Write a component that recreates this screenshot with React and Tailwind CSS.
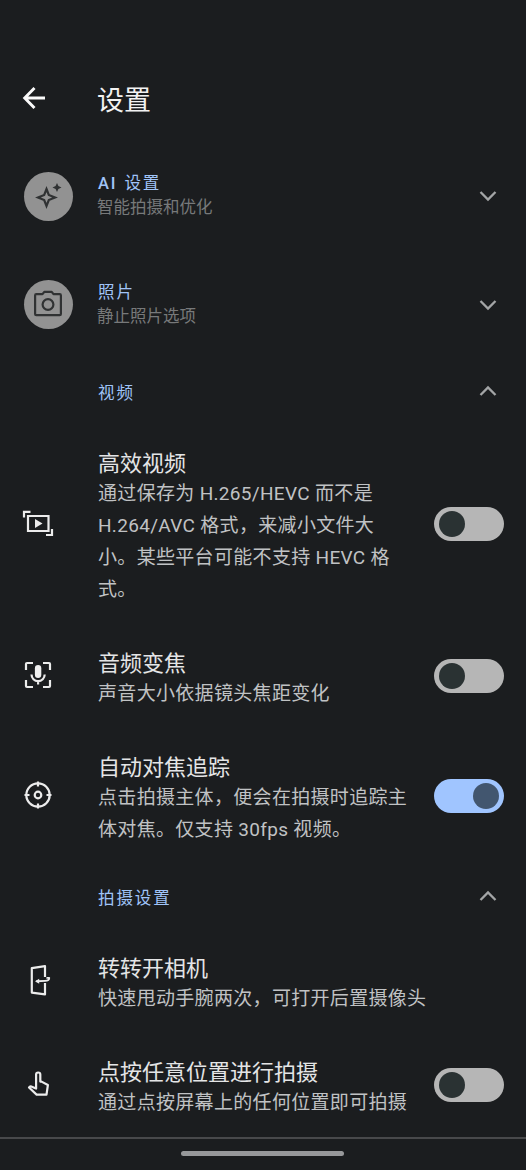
import React from "react";

function Chevron({ up }) {
  return (
    <svg className="mr-[29px] shrink-0" width="18" height="18" viewBox="0 0 18 18" fill="none" stroke="#a3a5a6" strokeWidth="2.3">
      <path d={up ? "M1.5 12 9 4.5 16.5 12" : "M1.5 5 9 12.500 16.5 5"} />
    </svg>
  );
}

function Toggle({ on }) {
  return (
    <div
      role="switch"
      aria-checked={!!on}
      className={
        on
          ? "mr-[22px] flex h-[34px] w-[70px] shrink-0 items-center justify-end rounded-full bg-[#a0c5ff] px-[5px]"
          : "mr-[22px] flex h-[34px] w-[70px] shrink-0 items-center rounded-full bg-[#b6b6b6] px-[5px]"
      }
    >
      <div className={on ? "size-[26px] rounded-full bg-[#42566f]" : "size-[26px] rounded-full bg-[#2a3233]"} />
    </div>
  );
}

function Group({ icon, title, sub }) {
  return (
    <div className="flex h-[108.5px] items-center">
      <div className="ml-6 size-[49px] shrink-0 rounded-full bg-[#929292]">{icon}</div>
      <div className="ml-6 flex-1">
        <div className="pl-px text-[16.5px] leading-6 tracking-[1.9px] text-[#a0c4f8]">{title}</div>
        <div className="text-[16.5px] leading-6 text-[#77797a]">{sub}</div>
      </div>
      <Chevron />
    </div>
  );
}

function Section({ title }) {
  return (
    <div className="flex h-[65px] items-center pl-[98px]">
      <div className="flex-1 pt-[4px] text-[16.5px] leading-6 tracking-[1.9px] text-[#a0c4f8]">{title}</div>
      <Chevron up />
    </div>
  );
}

function Item({ icon, title, desc, toggle, on }) {
  return (
    <div className="flex items-center">
      <div className="mb-[2px] ml-[22px] size-8 shrink-0">{icon}</div>
      <div className={toggle ? "mr-[25px] ml-11 w-[311px] shrink-0 pt-[26px] pb-[18px]" : "ml-11 flex-1 pt-[26px] pb-[18px]"}>
        <div className="text-[22px] leading-7 text-[#e4e5e6]">{title}</div>
        <div className="text-[19px] leading-8 tracking-[0.32px] text-[#c0c2c4]">{desc}</div>
      </div>
      {toggle && <Toggle on={on} />}
    </div>
  );
}

const line = { width: 32, height: 32, viewBox: "0 0 32 32", fill: "none", stroke: "#ececec", strokeWidth: 2.2 };

const SparkleIcon = () => (
  <svg width="49" height="49" viewBox="0 0 49 49">
    <path d="m22.500 17 2.300 6 6.200 2.500-6.200 2.500-2.300 6-2.300-6-6.200-2.500 6.200-2.500z" fill="none" stroke="#303233" strokeWidth="2.200" />
    <path d="m33 11 1.400 3.100 3.100 1.400-3.100 1.400L33 20l-1.400-3.100-3.100-1.400 3.100-1.400z" fill="#303233" />
  </svg>
);

const CameraIcon = () => (
  <svg width="49" height="49" viewBox="0 0 49 49" fill="none" stroke="#303233" strokeWidth="2.2" strokeLinejoin="round">
    <path d="M12.300 14.200h6.200l1.800-2.400h7.400l1.800 2.400h6.200q1.200 0 1.200 1.200v18.600q0 1.200-1.200 1.200h-23.400q-1.200 0-1.200-1.200V15.400q0-1.200 1.200-1.200z" />
    <circle cx="24" cy="24.500" r="5.400" />
  </svg>
);

const VideoIcon = () => (
  <svg {...line}>
    <path d="M6 9h20.500v15H6zM2 10.500V4.800h6.500M24 28h6v-6" />
    <path d="m13 12 7.500 4.500-7.500 4.500z" fill="#ececec" stroke="none" />
  </svg>
);

const MicIcon = () => (
  <svg {...line}>
    <path d="M4 11V5q0-1 1-1h6M21 4h6q1 0 1 1v6M28 21v6q0 1-1 1h-6M11 28H5q-1 0-1-1v-6M9.500 15.500a6.600 6.600 0 0 0 13.200 0M16.100 22v3.500" />
    <rect x="12.900" y="6" width="6.400" height="13" rx="3.200" fill="#f0f0f0" stroke="none" />
  </svg>
);

const TargetIcon = () => (
  <svg {...line}>
    <circle cx="16" cy="16" r="11.700" />
    <circle cx="16" cy="16" r="3.300" />
    <path d="M16 2.500v5M16 24.500v5M2.500 16h5M24.500 16h5" />
  </svg>
);

const FlipIcon = () => (
  <svg {...line}>
    <path d="M23 13V2.200L9.800 4.200v24.400L23 30.300V19" strokeLinejoin="round" />
    <path d="M15 17.300l8-.4q4.500-.2 4.200-3h-2" strokeWidth="1.900" strokeLinecap="round" strokeLinejoin="round" />
    <path d="M17.200 14.800v5L13 17.300z" fill="#ececec" stroke="none" />
  </svg>
);

const TapIcon = () => (
  <svg {...line} strokeLinejoin="round">
    <path d="M14.100 20.600V6.600a2 2 0 0 1 4.200 0v7h1.200l6.400 3.400-1.400 9.600H14.600L7 19.500q1-1.700 3.400-.6z" />
  </svg>
);

export default function App() {
  return (
    <div className="h-[1170px] w-[526px] overflow-hidden bg-[#1b1d1f] font-['Roboto','Noto_Sans_CJK_SC',sans-serif]" lang="zh-CN">
      <header className="flex h-[142px] items-center pt-[54px]">
        <svg className="ml-[22px] shrink-0" width="26" height="24" viewBox="0 0 26 24" fill="none" stroke="#fafafa" strokeWidth="2.900">
          <path d="M12.500 2 2.700 12l9.800 10M3 12h20" />
        </svg>
        <h1 className="ml-[49px] pt-[5px] text-[27px] leading-9 text-[#f2f2f2]">设置</h1>
      </header>
      <Group
        icon={<SparkleIcon />}
        title={
          <>
            <span className="font-medium">AI</span>
            <span className="ml-px"> 设置</span>
          </>
        }
        sub="智能拍摄和优化"
      />
      <Group icon={<CameraIcon />} title="照片" sub="静止照片选项" />
      <Section title="视频" />
      <Item
        icon={<VideoIcon />}
        title="高效视频"
        desc="通过保存为 H.265/HEVC 而不是 H.264/AVC 格式，来减小文件大小。某些平台可能不支持 HEVC 格式。"
        toggle
      />
      <Item icon={<MicIcon />} title="音频变焦" desc="声音大小依据镜头焦距变化" toggle />
      <Item
        icon={<TargetIcon />}
        title="自动对焦追踪"
        desc="点击拍摄主体，便会在拍摄时追踪主体对焦。仅支持 30fps 视频。"
        toggle
        on
      />
      <Section title="拍摄设置" />
      <Item icon={<FlipIcon />} title="转转开相机" desc="快速甩动手腕两次，可打开后置摄像头" />
      <Item icon={<TapIcon />} title="点按任意位置进行拍摄" desc="通过点按屏幕上的任何位置即可拍摄" toggle />
      <div className="h-[2px] bg-[#48494b]" />
      <div className="ml-[181px] mt-3 h-[5px] w-[163px] rounded-full bg-[#97989a]" />
    </div>
  );
}
